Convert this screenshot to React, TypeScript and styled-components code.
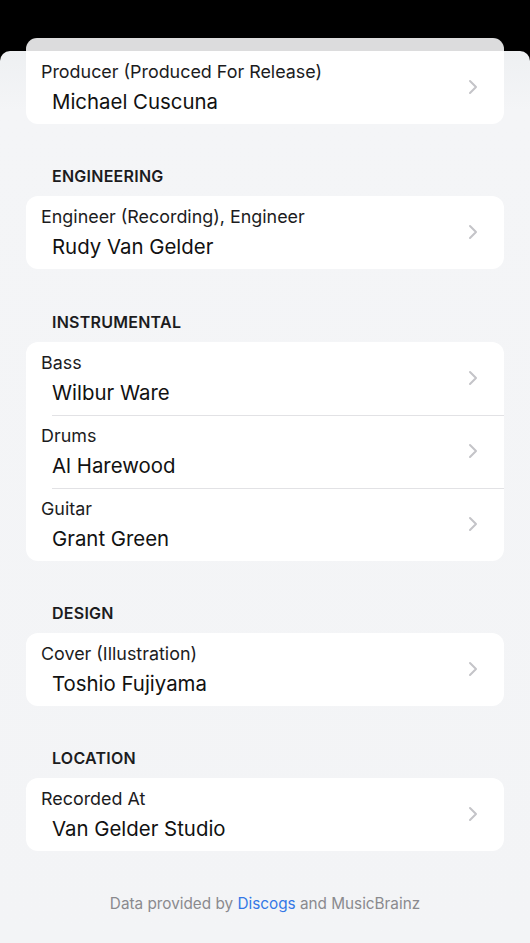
import React from "react";
import styled, { createGlobalStyle } from "styled-components";

const Global = createGlobalStyle`
  html, body { margin: 0; padding: 0; background: #000; }
  body { font-family: "Inter", "Noto Sans", "Liberation Sans", sans-serif; -webkit-font-smoothing: antialiased; }
  #root { min-height: 100vh; }
`;

const Page = styled.div`
  display: flex;
  flex-direction: column;
  min-height: 100vh;
  background: #000;
`;

const GhostTab = styled.div`
  margin: 38px 26px 0;
  height: 13px;
  background: #dcdcdd;
  border-radius: 11px 11px 0 0;
`;

const Sheet = styled.div`
  flex: 1;
  display: flex;
  flex-direction: column;
  padding: 0 26px 0;
  background: linear-gradient(180deg, #eef0f2 0px, #f4f5f7 60px, #f3f4f6 100%);
  border-radius: 10px 10px 0 0;
`;

const Section = styled.section<{ $first?: boolean }>`
  display: flex;
  flex-direction: column;
  margin-top: ${(p) => (p.$first ? "0" : "42.3px")};
`;

const SectionTitle = styled.h2`
  margin: 0 0 10px;
  padding-left: 26px;
  font-size: 16px;
  line-height: 20px;
  font-weight: 600;
  letter-spacing: 0.25px;
  color: #1c1c1e;
`;

const Card = styled.div<{ $flatTop?: boolean }>`
  background: #fff;
  border-radius: ${(p) => (p.$flatTop ? "0 0 12px 12px" : "12px")};
  overflow: hidden;
`;

const Row = styled.div<{ $divider?: boolean }>`
  position: relative;
  display: flex;
  align-items: center;
  height: 73px;
  padding: 0 26px 0 15px;
  box-sizing: border-box;
  &::before {
    content: "";
    display: ${(p) => (p.$divider ? "block" : "none")};
    position: absolute;
    top: 0;
    left: 26px;
    right: 0;
    height: 1px;
    background: #e2e2e5;
  }
`;

const RowText = styled.div`
  flex: 1;
  display: flex;
  flex-direction: column;
  padding-top: 2px;
`;

const Role = styled.div`
  font-size: 17.9px;
  line-height: 22px;
  color: #1c1c1e;
`;

const Name = styled.div`
  margin-top: 5px;
  padding-left: 11px;
  font-size: 20.4px;
  line-height: 28px;
  color: #111;
`;

const Chevron = styled.svg`
  width: 10px;
  height: 16px;
  flex-shrink: 0;
  margin-top: -1px;
`;

const Footer = styled.div`
  margin-top: 43px;
  padding-bottom: 20px;
  text-align: center;
  font-size: 15.3px;
  line-height: 20px;
  color: #8a8a8e;
`;

const Link = styled.span`
  color: #3478e6;
`;

type Credit = { role: string; name: string };
type Group = { title?: string; items: Credit[] };

const groups: Group[] = [
  { items: [{ role: "Producer (Produced For Release)", name: "Michael Cuscuna" }] },
  { title: "ENGINEERING", items: [{ role: "Engineer (Recording), Engineer", name: "Rudy Van Gelder" }] },
  {
    title: "INSTRUMENTAL",
    items: [
      { role: "Bass", name: "Wilbur Ware" },
      { role: "Drums", name: "Al Harewood" },
      { role: "Guitar", name: "Grant Green" },
    ],
  },
  { title: "DESIGN", items: [{ role: "Cover (Illustration)", name: "Toshio Fujiyama" }] },
  { title: "LOCATION", items: [{ role: "Recorded At", name: "Van Gelder Studio" }] },
];

const ChevronIcon = () => (
  <Chevron viewBox="0 0 10 16" fill="none">
    <path d="M2 2l6 6-6 6" stroke="#c4c4c8" strokeWidth="2" strokeLinecap="round" strokeLinejoin="round" />
  </Chevron>
);

export default function App() {
  return (
    <Page>
      <Global />
      <GhostTab />
      <Sheet>
        {groups.map((g, gi) => (
          <Section key={gi} $first={gi === 0}>
            {g.title && <SectionTitle>{g.title}</SectionTitle>}
            <Card $flatTop={gi === 0}>
              {g.items.map((c, i) => (
                <Row key={c.role} $divider={i > 0}>
                  <RowText>
                    <Role>{c.role}</Role>
                    <Name>{c.name}</Name>
                  </RowText>
                  <ChevronIcon />
                </Row>
              ))}
            </Card>
          </Section>
        ))}
        <Footer>
          Data provided by <Link>Discogs</Link> and MusicBrainz
        </Footer>
      </Sheet>
    </Page>
  );
}
